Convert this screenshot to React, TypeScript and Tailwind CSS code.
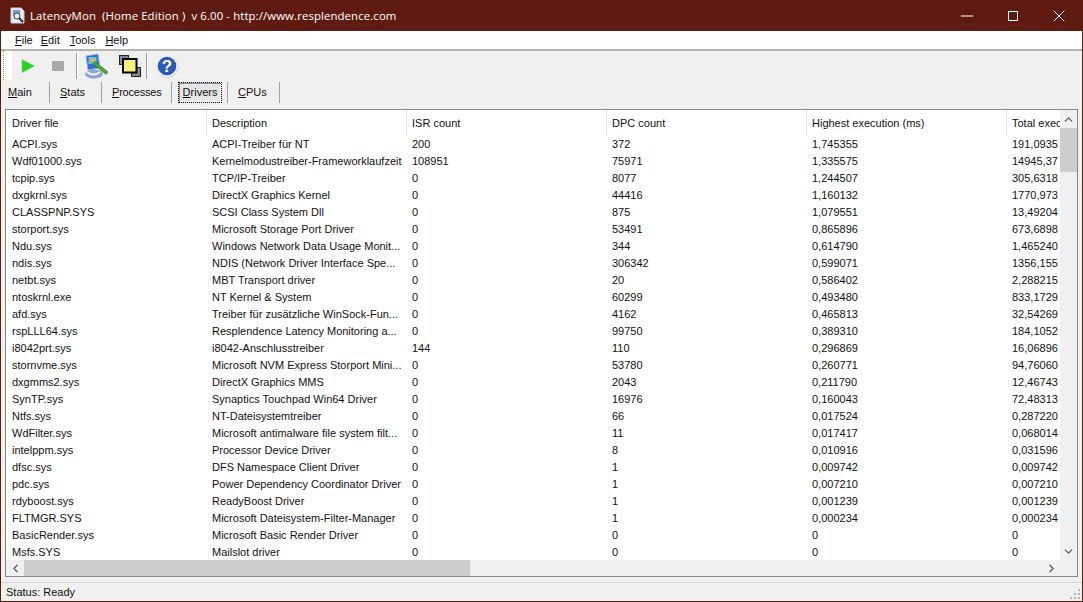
import React from "react";
import { ChevronUp, ChevronDown, ChevronLeft, ChevronRight, Minus, X } from "lucide-react";

const ROWS: string[][] = [
  ["ACPI.sys", "ACPI-Treiber für NT", "200", "372", "1,745355", "191,0935"],
  ["Wdf01000.sys", "Kernelmodustreiber-Frameworklaufzeit", "108951", "75971", "1,335575", "14945,37"],
  ["tcpip.sys", "TCP/IP-Treiber", "0", "8077", "1,244507", "305,6318"],
  ["dxgkrnl.sys", "DirectX Graphics Kernel", "0", "44416", "1,160132", "1770,973"],
  ["CLASSPNP.SYS", "SCSI Class System Dll", "0", "875", "1,079551", "13,49204"],
  ["storport.sys", "Microsoft Storage Port Driver", "0", "53491", "0,865896", "673,6898"],
  ["Ndu.sys", "Windows Network Data Usage Monit...", "0", "344", "0,614790", "1,465240"],
  ["ndis.sys", "NDIS (Network Driver Interface Spe...", "0", "306342", "0,599071", "1356,155"],
  ["netbt.sys", "MBT Transport driver", "0", "20", "0,586402", "2,288215"],
  ["ntoskrnl.exe", "NT Kernel & System", "0", "60299", "0,493480", "833,1729"],
  ["afd.sys", "Treiber für zusätzliche WinSock-Fun...", "0", "4162", "0,465813", "32,54269"],
  ["rspLLL64.sys", "Resplendence Latency Monitoring a...", "0", "99750", "0,389310", "184,1052"],
  ["i8042prt.sys", "i8042-Anschlusstreiber", "144", "110", "0,296869", "16,06896"],
  ["stornvme.sys", "Microsoft NVM Express Storport Mini...", "0", "53780", "0,260771", "94,76060"],
  ["dxgmms2.sys", "DirectX Graphics MMS", "0", "2043", "0,211790", "12,46743"],
  ["SynTP.sys", "Synaptics Touchpad Win64 Driver", "0", "16976", "0,160043", "72,48313"],
  ["Ntfs.sys", "NT-Dateisystemtreiber", "0", "66", "0,017524", "0,287220"],
  ["WdFilter.sys", "Microsoft antimalware file system filt...", "0", "11", "0,017417", "0,068014"],
  ["intelppm.sys", "Processor Device Driver", "0", "8", "0,010916", "0,031596"],
  ["dfsc.sys", "DFS Namespace Client Driver", "0", "1", "0,009742", "0,009742"],
  ["pdc.sys", "Power Dependency Coordinator Driver", "0", "1", "0,007210", "0,007210"],
  ["rdyboost.sys", "ReadyBoost Driver", "0", "1", "0,001239", "0,001239"],
  ["FLTMGR.SYS", "Microsoft Dateisystem-Filter-Manager", "0", "1", "0,000234", "0,000234"],
  ["BasicRender.sys", "Microsoft Basic Render Driver", "0", "0", "0", "0"],
  ["Msfs.SYS", "Mailslot driver", "0", "0", "0", "0"],
];

const HEADERS = ["Driver file", "Description", "ISR count", "DPC count", "Highest execution (ms)", "Total execution (ms)"];

function Mnemonic({ k, rest }: { k: string; rest: string }) {
  return (
    <span>
      <span className="underline underline-offset-1">{k}</span>
      {rest}
    </span>
  );
}

function AppIcon() {
  return (
    <svg width="16" height="17" viewBox="0 0 16 17">
      <path d="M1 1h10l3 3v12H1z" fill="#e6edf7" stroke="#c3cfe0" />
      <rect x="3" y="3" width="7" height="6" fill="#7f9cc6" />
      <circle cx="7" cy="9" r="3" fill="#f2f5fa" stroke="#39424f" />
      <path d="M9 11l4 4" stroke="#2a2f38" strokeWidth="2" />
    </svg>
  );
}

function PlayIcon() {
  return (
    <svg width="14" height="14" viewBox="0 0 14 14">
      <path d="M1 0.5v13l12.5-6.5z" fill="#22d322" stroke="#6fd46f" strokeWidth="0.6" />
    </svg>
  );
}

function ToolsIcon() {
  return (
    <svg width="26" height="26" viewBox="0 0 26 26">
      <ellipse cx="10" cy="21" rx="9" ry="4.5" fill="#8fa4d6" />
      <path d="M2 3l12-2 2 14-12 2z" fill="#2f6fd0" stroke="#9cb4d4" />
      <rect x="4.5" y="4" width="8" height="7" fill="#62c4ee" />
      <path d="M3 19c4 3 9 3 13 0" stroke="#f4f6fb" strokeWidth="2" fill="none" />
      <path d="M9 7l15 12-2 2.5L7.5 9.5z" fill="#4ea838" stroke="#2f6e22" strokeWidth="0.6" />
      <path d="M6 5l6 1.5-4 4z" fill="#f0b840" />
    </svg>
  );
}

function WindowsIcon() {
  return (
    <svg width="24" height="24" viewBox="0 0 24 24">
      <rect x="13.5" y="13.5" width="9" height="9" fill="#8a8a8a" stroke="#222" />
      <rect x="1.5" y="1.5" width="9" height="9" fill="#8a8a8a" stroke="#222" />
      <rect x="5" y="5" width="13.5" height="13.5" fill="#f6f07c" stroke="#000" strokeWidth="2" />
    </svg>
  );
}

function HelpIcon() {
  return (
    <svg width="24" height="24" viewBox="0 0 24 24">
      <circle cx="12.6" cy="12.6" r="11" fill="#cfd4df" />
      <circle cx="12" cy="12" r="10" fill="#2a5bb8" stroke="#eef2fa" strokeWidth="1.4" />
      <text x="12" y="18" textAnchor="middle" fontSize="17" fontWeight="700" fill="#fff" fontFamily="Liberation Sans, sans-serif">?</text>
    </svg>
  );
}

function Grip() {
  return (
    <svg width="11" height="11" viewBox="0 0 11 11" className="absolute right-[1px] bottom-[1px]">
      <g fill="#b4b4b4">
        <rect x="8" y="0" width="2" height="2" />
        <rect x="4" y="4" width="2" height="2" />
        <rect x="8" y="4" width="2" height="2" />
        <rect x="0" y="8" width="2" height="2" />
        <rect x="4" y="8" width="2" height="2" />
        <rect x="8" y="8" width="2" height="2" />
      </g>
    </svg>
  );
}

function Tab({ k, rest, w, active }: { k: string; rest: string; w: string; active?: boolean }) {
  return (
    <div className={`flex h-full items-center ${w}`}>
      <div className={active ? "flex h-[21px] w-[44px] items-center justify-center border border-dotted border-black bg-[#e6e6e6] shadow-[inset_1px_1px_0_#8a8a8a,inset_-1px_-1px_0_#fff]" : ""}>
        <Mnemonic k={k} rest={rest} />
      </div>
    </div>
  );
}

function TabSep() {
  return <div className="h-[21px] w-[1px] bg-[#a0a0a0]" />;
}

export default function App() {
  return (
    <div className="flex h-[602px] w-[1083px] flex-col overflow-hidden border-x border-b border-[#5f1a10] bg-[#f0f0f0] text-[11px] text-[#111] [font-family:'Liberation_Sans',sans-serif]">
      {/* Title bar */}
      <div className="flex h-[31px] shrink-0 items-center bg-[#5f1b11] text-white">
        <div className="ml-[9px] mr-[4px]"><AppIcon /></div>
        <span className="text-[11.4px] tracking-[0.1px] [font-family:'Open_Sans',sans-serif]">LatencyMon&nbsp; (Home Edition )&nbsp; v 6.00 - http://www.resplendence.com</span>
        <div className="ml-auto flex h-full items-center">
          <div className="flex w-[46px] justify-center"><Minus size={20} strokeWidth={1.2} /></div>
          <div className="flex w-[46px] justify-center"><div className="h-[10px] w-[10px] border border-white" /></div>
          <div className="flex w-[46px] justify-center"><X size={20} strokeWidth={1.2} /></div>
        </div>
      </div>

      {/* Menu */}
      <div className="flex h-[20px] shrink-0 items-center gap-[10px] border-b-2 border-[#b4b4b4] bg-white pl-[14px]">
        <span className="mr-[-2px]"><Mnemonic k="F" rest="ile" /></span>
        <Mnemonic k="E" rest="dit" />
        <Mnemonic k="T" rest="ools" />
        <Mnemonic k="H" rest="elp" />
      </div>

      {/* Toolbar */}
      <div className="flex h-[29px] shrink-0 items-center">
        <div className="ml-[2px] h-full w-[9px] border-l border-dotted border-[#999] bg-white" />
        <div className="ml-[9px]"><PlayIcon /></div>
        <div className="ml-[17px] h-[10px] w-[12px] bg-[#a8a8a8]" />
        <div className="ml-[12px] h-[26px] w-[2px] border-l border-[#a0a0a0] bg-white" />
        <div className="ml-[6px]"><ToolsIcon /></div>
        <div className="ml-[8px]"><WindowsIcon /></div>
        <div className="ml-[4px] h-[26px] w-[2px] border-l border-[#a0a0a0] bg-white" />
        <div className="ml-[7px]"><HelpIcon /></div>
      </div>

      {/* Tabs */}
      <div className="flex h-[25px] shrink-0 items-center pl-[7px]">
        <Tab k="M" rest="ain" w="w-[41px]" />
        <TabSep />
        <Tab k="S" rest="tats" w="w-[51px] pl-[10px]" />
        <TabSep />
        <Tab k="P" rest="rocesses" w="w-[69px] pl-[10px] tracking-[-0.2px]" />
        <TabSep />
        <Tab k="D" rest="rivers" w="w-[55px] pl-[6px]" active />
        <TabSep />
        <Tab k="C" rest="PUs" w="w-[51px] pl-[10px]" />
        <TabSep />
      </div>

      {/* List */}
      <div className="mx-[4px] mt-[4px] flex h-[468px] shrink-0 flex-col border border-[#828790] bg-white">
        <div className="flex min-h-0 flex-1">
          <div className="min-w-0 flex-1 overflow-hidden">
            <div className="flex h-[26px] w-[1220px] items-center">
              {HEADERS.map((h, i) => (
                <div key={h} className={`h-full w-[200px] shrink-0 leading-[26px] ${i > 0 ? "border-l border-[#e5e5e5] pl-[5px]" : "pl-[6px]"}`}>{h}</div>
              ))}
            </div>
            {ROWS.map((r) => (
              <div key={r[0]} className="flex h-[17px] w-[1220px] items-center leading-[17px]">
                {r.map((c, i) => (
                  <div key={i} className="w-[200px] shrink-0 overflow-hidden whitespace-nowrap pl-[6px]">{c}</div>
                ))}
              </div>
            ))}
          </div>
          {/* Vertical scrollbar */}
          <div className="flex w-[17px] shrink-0 flex-col bg-[#f0f0f0] text-[#606060]">
            <div className="flex h-[18px] items-center justify-center"><ChevronUp size={13} strokeWidth={2.5} /></div>
            <div className="h-[44px] bg-[#cdcdcd]" />
            <div className="flex-1" />
            <div className="flex h-[17px] items-center justify-center"><ChevronDown size={13} strokeWidth={2.5} /></div>
          </div>
        </div>
        {/* Horizontal scrollbar */}
        <div className="flex h-[16px] shrink-0 bg-[#f0f0f0] text-[#606060]">
          <div className="flex w-[18px] items-center justify-center"><ChevronLeft size={13} strokeWidth={2.5} /></div>
          <div className="w-[446px] bg-[#cdcdcd]" />
          <div className="flex-1" />
          <div className="mr-[17px] flex w-[18px] items-center justify-center"><ChevronRight size={13} strokeWidth={2.5} /></div>
        </div>
      </div>

      {/* Status */}
      <div className="relative mt-[5px] flex flex-1 items-center border-t border-[#d4d4d4] pl-[5px]">
        Status: Ready
        <Grip />
      </div>
    </div>
  );
}
